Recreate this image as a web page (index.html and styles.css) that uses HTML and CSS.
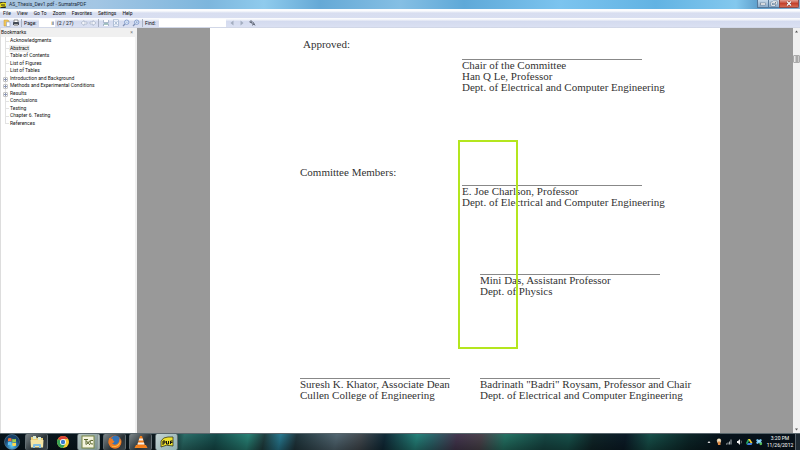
FILE: index.html
```html
<!DOCTYPE html>
<html lang="en">
<head>
<meta charset="utf-8">
<title>AS_Thesis_Dev1.pdf - SumatraPDF</title>
<link rel="stylesheet" href="styles.css">
</head>
<body>
<header class="titlebar">
  <svg class="app-icon" viewBox="0 0 6 6"><rect width="6" height="6" rx="1" fill="#222"/><path d="M0 1.5Q3 0 6 1V4.500Q3 4 0 5.500Z" fill="#e8dc20"/><path d="M1 3h4" stroke="#222" stroke-width="1"/></svg>
  <h1 class="title">AS_Thesis_Dev1.pdf - SumatraPDF</h1>
  <div class="window-controls">
    <button class="win-btn" aria-label="Minimize"><svg viewBox="0 0 10 7"><rect x="2.500" y="3" width="5" height="2" fill="#fff" stroke="#56687c" stroke-width=".5"/></svg></button>
    <button class="win-btn" aria-label="Restore"><svg viewBox="0 0 10 7"><path d="M4 1.500h3.500v3M2.500 2.500h3.500v3h-3.500z" fill="none" stroke="#56687c" stroke-width="1.600"/><path d="M4 1.500h3.500v3M2.500 2.500h3.500v3h-3.500z" fill="none" stroke="#fff" stroke-width=".8"/></svg></button>
    <button class="win-btn close" aria-label="Close"><svg viewBox="0 0 10 7"><path d="M3 1.500l4 4M7 1.500l-4 4" stroke="#6b2c25" stroke-width="2"/><path d="M3 1.500l4 4M7 1.500l-4 4" stroke="#fff" stroke-width="1.200"/></svg></button>
  </div>
</header>
<nav class="menubar">
  <button>File</button><button>View</button><button>Go To</button><button>Zoom</button><button>Favorites</button><button>Settings</button><button>Help</button>
</nav>
<div class="toolbar">
  <button class="tool" aria-label="Open"><svg viewBox="0 0 8 8"><path d="M1 1h4l1 1v5H1z" fill="#f0c558" stroke="#c59a3a" stroke-width=".5"/><path d="M3.500 3h3.500v4.500H3.500z" fill="#fff" stroke="#8aa2c8" stroke-width=".6"/></svg></button>
  <button class="tool" aria-label="Print"><svg viewBox="0 0 8 8"><path d="M2 3V1h4v2" fill="#fff" stroke="#666" stroke-width=".7"/><rect x="1" y="3" width="6" height="3" rx=".6" fill="#444b56"/><path d="M2 5h4v2H2z" fill="#aaa"/></svg></button>
  <span class="divider"></span>
  <label class="page-label" for="page">Page:</label>
  <input class="page-input" id="page" value="ii">
  <span class="page-total">(2 / 27)</span>
  <button class="tool" aria-label="Previous page"><svg viewBox="0 0 8 8"><path d="M1 4l3-2.500v1.500h3v2H4v1.500z" fill="#f4f6fb" stroke="#9dabc0" stroke-width=".6"/></svg></button>
  <button class="tool" aria-label="Next page"><svg viewBox="0 0 8 8"><path d="M7 4L4 1.500v1.500H1v2h3v1.500z" fill="#f4f6fb" stroke="#9dabc0" stroke-width=".6"/></svg></button>
  <span class="divider"></span>
  <button class="tool wide" aria-label="Fit width"><svg viewBox="0 0 8 8"><path d="M1.500 1v2.500h5V1M1.500 7V5h5v2" fill="#fff" stroke="#8fa2ba" stroke-width=".7"/><path d="M2 5h4" stroke="#7cb0a0" stroke-width="1"/></svg></button>
  <button class="tool wide" aria-label="Fit page"><svg viewBox="0 0 8 8"><rect x="1.500" y=".8" width="5" height="6.400" fill="#f4f8ff" stroke="#8ea4c2" stroke-width=".6"/><path d="M2.500 2l3 4M5.500 2l-3 4" stroke="#91a8c5" stroke-width=".7"/></svg></button>
  <button class="tool wide" aria-label="Zoom out"><svg viewBox="0 0 8 8"><path d="M1 7l2-2" stroke="#7f91b3" stroke-width="1.200"/><circle cx="4.700" cy="3.200" r="2.200" fill="#e4f0ff" stroke="#6482bd" stroke-width=".7"/><path d="M3.700 3.200h2" stroke="#7c93bb" stroke-width=".6"/></svg></button>
  <button class="tool wide" aria-label="Zoom in"><svg viewBox="0 0 8 8"><path d="M1 7l2-2" stroke="#7f91b3" stroke-width="1.200"/><circle cx="4.700" cy="3.200" r="2.200" fill="#e4f0ff" stroke="#6482bd" stroke-width=".7"/><path d="M3.700 3.200h2M4.700 2.200v2" stroke="#7c93bb" stroke-width=".6"/></svg></button>
  <span class="divider"></span>
  <label class="find-label" for="find">Find:</label>
  <input class="find-input" id="find">
  <button class="tool wide" aria-label="Find previous"><svg viewBox="0 0 8 8"><path d="M5.500 1.500v5L2.500 4z" fill="#a3adbf"/></svg></button>
  <button class="tool wide" aria-label="Find next"><svg viewBox="0 0 8 8"><path d="M2.500 1.500v5L5.500 4z" fill="#a3adbf"/></svg></button>
  <button class="tool wide" aria-label="Match case"><svg viewBox="0 0 8 8"><path d="M2 3.500V2h2v3M2 3.500h2M4.500 6.500l1-3 1.500 3M5 5.500h1.500" fill="none" stroke="#555d6c" stroke-width=".8"/></svg></button>
</div>
<main class="workspace">
  <aside class="sidebar">
    <div class="sidebar-head"><h2>Bookmarks</h2><button aria-label="Close bookmarks">×</button></div>
    <ul class="tree">
      <li><a href="#">Acknowledgments</a></li>
      <li><a href="#" class="selected">Abstract</a></li>
      <li><a href="#">Table of Contents</a></li>
      <li><a href="#">List of Figures</a></li>
      <li><a href="#">List of Tables</a></li>
      <li class="branch"><a href="#">Introduction and Background</a></li>
      <li class="branch"><a href="#">Methods and Experimental Conditions</a></li>
      <li class="branch"><a href="#">Results</a></li>
      <li><a href="#">Conclusions</a></li>
      <li><a href="#">Testing</a></li>
      <li><a href="#">Chapter 6. Testing</a></li>
      <li><a href="#">References</a></li>
    </ul>
  </aside>
  <section class="viewer">
    <article class="paper">
      <p class="label approved">Approved:</p>
      <div class="signature chair">
        <p>Chair of the Committee</p>
        <p>Han Q Le, Professor</p>
        <p>Dept. of Electrical and Computer Engineering</p>
      </div>
      <p class="label members">Committee Members:</p>
      <div class="signature member">
        <p>E. Joe Charlson, Professor</p>
        <p>Dept. of Electrical and Computer Engineering</p>
      </div>
      <div class="signature physics">
        <p>Mini Das, Assistant Professor</p>
        <p>Dept. of Physics</p>
      </div>
      <div class="deans">
        <div class="signature dean">
          <p>Suresh K. Khator, Associate Dean</p>
          <p>Cullen College of Engineering</p>
        </div>
        <div class="signature">
          <p>Badrinath "Badri" Roysam, Professor and Chair</p>
          <p>Dept. of Electrical and Computer Engineering</p>
        </div>
      </div>
      <div class="highlight"></div>
    </article>
  </section>
  <div class="scrollbar">
    <button aria-label="Scroll up"><svg viewBox="0 0 7 7"><path d="M2 4.500L3.500 2.500 5 4.500z" fill="#555"/></svg></button>
    <div class="track"><div class="thumb"></div></div>
    <button aria-label="Scroll down"><svg viewBox="0 0 7 7"><path d="M2 2.500L3.500 4.500 5 2.500z" fill="#555"/></svg></button>
  </div>
</main>
<footer class="taskbar">
  <button class="task start" aria-label="Start"><svg viewBox="0 0 16 16"><defs><radialGradient id="orb" cy=".75"><stop offset="0" stop-color="#6fd0ee"/><stop offset=".6" stop-color="#2b78ad"/><stop offset="1" stop-color="#174067"/></radialGradient></defs><circle cx="8" cy="8" r="7.500" fill="url(#orb)" stroke="#6a93ac" stroke-width=".5"/><path d="M4 4.500q2-1 3.500 0v3q-2-1-3.500 0z" fill="#ef6b35"/><path d="M8.300 4.800q2 1 3.700 0v3q-1.700 1-3.700 0z" fill="#a4d149"/><path d="M4 8.300q2-1 3.500 0v3q-2-1-3.500 0z" fill="#64c5f4"/><path d="M8.300 8.600q2 1 3.700 0v3q-1.700 1-3.700 0z" fill="#ffd94c"/></svg></button>
  <button class="task open" aria-label="Explorer"><svg viewBox="0 0 16 16"><path d="M2 3h5l1 1h6v9H2z" fill="#e9cf78"/><path d="M4 2h3v3H4zM9 3h3v3H9z" fill="#d8e9d4"/><path d="M1.500 6h13l-.5 7.500H2z" fill="#f6e6a4"/><path d="M4 14v-3q0-1 1-1h6q1 0 1 1v3h-2v-2H6v2z" fill="#82bfe2"/></svg></button>
  <button class="task" aria-label="Chrome"><svg viewBox="0 0 16 16"><circle cx="8" cy="8" r="6" fill="#f5cd32"/><path d="M8 8L2.800 5A6 6 0 0 1 13.200 5H8z" fill="#db4437"/><path d="M2.800 5A6 6 0 0 0 8 14L10.600 9.500 8 8z" fill="#37a257"/><circle cx="8" cy="8" r="3" fill="#fff"/><circle cx="8" cy="8" r="2.200" fill="#397bd1"/></svg></button>
  <button class="task open active txc" aria-label="TeXnicCenter"><svg viewBox="0 0 16 16"><rect x="2" y="2" width="12" height="12" fill="#f5f5df" stroke="#7b8745"/><path d="M4 5.500h4M6 5.500v5M6.500 7l3.500 4M10 6.500l-3.500 4M13 6.500q-3-1-3 1.500t3 2" stroke="#59652c" fill="none"/></svg></button>
  <button class="task open" aria-label="Firefox"><svg viewBox="0 0 16 16"><circle cx="8" cy="8" r="6.500" fill="#e66d21"/><circle cx="8.500" cy="6.500" r="4.800" fill="#3373b7"/><path d="M2 4q1 0 2 1 1-1 2 0-1 1 1.500 2.500-1 2-2.500 1.500 2 3 5 1 3-2 2-6 2 2 2 5-1 5.500-6 5.500T1.500 9z" fill="#ee7b24"/><path d="M13.500 6q0 6-5.500 7-3 0-4-1.500 3 1.500 6 0 3-2 3.500-5.500z" fill="#f9cb4b"/></svg></button>
  <button class="task open" aria-label="VLC"><svg viewBox="0 0 16 16"><path d="M3 11h10l1.500 3H1.500z" fill="#f58421"/><path d="M7 2h2l3 10q-4 2-8 0z" fill="#f37c18"/><path d="M6.300 4.500h3.400l.7 2H5.600zM5 8.500h6l.5 2h-7z" fill="#f1eee9"/></svg></button>
  <button class="task open active sumatra" aria-label="SumatraPDF"><svg viewBox="0 0 16 16"><path d="M2 7q2-4 7-4h5v9q-7-2-12 1z" fill="#eee22d" stroke="#242611" stroke-width=".7"/><path d="M4 11V7h2v2H4M7.500 7v3h2V7M11.500 10V7h2M11.500 8.500h2" fill="none" stroke="#111" stroke-width="1"/></svg></button>
  <div class="tray">
    <svg viewBox="0 0 8 8"><path d="M2.500 5L4 3l1.500 2z" fill="#ddd"/></svg>
    <svg viewBox="0 0 8 8"><circle cx="4" cy="2.800" r="2.200" fill="#eee2c4"/><path d="M2.500 3.500h3v3.500h-2.500z" fill="#dd8b46"/><path d="M2 2h1M5 2h1" stroke="#b28b70" stroke-width=".6"/></svg>
    <svg viewBox="0 0 8 8"><path d="M1 6.500h1v-1H1zM2.500 6.500h1v-2h-1zM4 6.500h1v-3H4zM5.500 6.500h1v-5h-1z" fill="#aeb6ba"/></svg>
    <svg viewBox="0 0 8 8"><path d="M2 3h1l2-2v6L3 5H2z" fill="#eee"/><path d="M6 2.500q1 1.500 0 3" fill="none" stroke="#aaa" stroke-width=".6"/></svg>
    <svg viewBox="0 0 8 8"><path d="M3 1h2l-3 6-1-2z" fill="#22a565"/><path d="M3 1h2l2.500 4h-2z" fill="#f5cf36"/><path d="M3 5h4.500L6.500 7H2z" fill="#3e7fe0"/></svg>
    <svg viewBox="0 0 8 8"><path d="M1 2l1.500-1L4 2l1.500-1L7 2 6 3.500 7 5 5.500 6 4 5 2.500 6 1 5l1-1.500z" fill="#78c8f4"/><path d="M3 3l1-.6 1 .6-1 .8z" fill="#fff"/><circle cx="5.800" cy="5.800" r="1.400" fill="#54bd54"/></svg>
  </div>
  <div class="clock"><time>3:20 PM</time><time>11/26/2012</time></div>
  <button class="show-desktop" aria-label="Show desktop"></button>
</footer>
</body>
</html>
```
FILE: styles.css
```css
*, *::before, *::after { box-sizing: border-box; }
body {
  margin: 0;
  height: 100vh;
  display: flex;
  flex-direction: column;
  overflow: hidden;
  font: 5px/7px Roboto, "Open Sans", sans-serif;
  color: #111;
}
button, input {
  font: inherit;
  color: inherit;
  border: 0;
  padding: 0;
  margin: 0;
  background: none;
  border-radius: 0;
}
h1, h2, p, ul { margin: 0; padding: 0; font: inherit; }
svg { display: block; }

.titlebar {
  flex: none;
  height: 9px;
  display: flex;
  align-items: center;
  padding-right: 1px;
  background: linear-gradient(90deg, #a9c4dd 0%, #a3c6e4 12%, #7db6dd 26%, #8fcbed 33%, #65a9d6 40%, #85bfe4 50%, #5fa9d8 58%, #7cc4ef 70%, #62b3e3 82%, #83c8ee 92%, #5b9cc9 95%, #86b0d0 100%);
}
.app-icon { width: 6px; height: 6px; margin-right: 3px; }
.title { flex: 1; color: #1a2a3a; }
.window-controls { display: flex; align-self: flex-start; }
.win-btn {
  width: 11px;
  height: 8px;
  border: 1px solid #55789a;
  border-top: 0;
  border-right-width: 0;
  background: linear-gradient(#c7d9e9, #8cacca);
}
.win-btn svg { height: 7px; margin: 0 auto; }
.win-btn.close {
  width: 20px;
  border: 1px solid #8a4a48;
  border-top: 0;
  border-radius: 0 0 2px 0;
  background: linear-gradient(#e0a094, #c5412b 50%, #d4694f);
}

.menubar {
  flex: none;
  height: 9px;
  display: flex;
  align-items: center;
  gap: 6px;
  padding-left: 3px;
  background: linear-gradient(#fbfcfe 20%, #d8def0 45%, #d9dff1);
}
.toolbar {
  flex: none;
  height: 10px;
  display: flex;
  align-items: center;
  padding-left: 2px;
  background: linear-gradient(#fafbfd 10%, #d4dbef 35%, #dae0f2 85%, #cdd3e2);
}
.tool { width: 9px; height: 8px; }
.tool.wide { width: 10px; }
.tool svg { width: 8px; height: 8px; margin: 0 auto; }
.divider { width: 1px; height: 8px; margin: 0 2px 0 1px; background: #a9b1c3; }
.page-label { width: 15px; }
.page-input { width: 16px; height: 8px; background: #fff; text-align: right; padding-right: 1px; }
.page-total { width: 24px; padding-left: 2px; }
.find-label { width: 14px; }
.find-input { width: 67px; height: 8px; background: #fff; margin-right: 1px; }

.workspace { flex: 1; min-height: 0; display: flex; }
.sidebar {
  flex: none;
  width: 137px;
  border-left: 1px solid #ddd;
  border-right: 2px solid #f0f0f0;
  background: #fff;
}
.sidebar-head {
  height: 9px;
  display: flex;
  align-items: center;
  justify-content: space-between;
  padding-right: 2px;
  background: #f0f0f0;
}
.sidebar-head button { color: #777; }
.tree {
  height: 90px;
  display: grid;
  grid-auto-rows: 1fr;
  list-style: none;
  padding-left: 4px;
}
.tree li { display: flex; align-items: center; position: relative; padding-left: 4px; }
.tree li::before {
  content: "";
  position: absolute;
  left: 0;
  top: 0;
  bottom: 0;
  border-left: 1px solid #e2e2e2;
}
.tree li:last-child::before { bottom: 50%; }
.tree li::after {
  content: "";
  position: absolute;
  left: 0;
  top: 50%;
  width: 4px;
  border-top: 1px solid #e2e2e2;
}
.tree .branch::after {
  left: -2px;
  top: 2px;
  width: 5px;
  height: 5px;
  border: 1px solid #c4c4c4;
  border-radius: 1px;
  background:
    linear-gradient(#8c97b3, #8c97b3) center / 3px 1px no-repeat,
    linear-gradient(#8c97b3, #8c97b3) center / 1px 3px no-repeat,
    #fff;
}
.tree a { color: inherit; text-decoration: none; line-height: 7px; padding: 0 1px; }
.tree .selected { background: #eee; }

.viewer { flex: 1; min-width: 0; display: flex; padding: 0 73px; background: #999; }
.paper {
  flex: 1;
  position: relative;
  padding: 11px 0 0 90px;
  background: #fff;
  font: 11px/11px "Liberation Serif", serif;
  color: #333;
  white-space: nowrap;
}
.approved { padding-left: 3px; }
.signature { width: 180px; border-top: 1px solid #888; }
.chair { margin: 9px 0 0 162px; }
.members { margin-top: 74px; }
.member { margin: 7px 0 0 162px; }
.physics { margin: 66px 0 0 180px; }
.deans { display: flex; gap: 30px; margin-top: 81px; }
.dean { width: 150px; }
.highlight {
  position: absolute;
  left: 248px;
  top: 112px;
  width: 60px;
  height: 209px;
  border: 2px solid #b4e61e;
}

.scrollbar { flex: none; width: 7px; display: flex; flex-direction: column; background: #f0f0f0; }
.scrollbar button { height: 7px; }
.track { flex: 1; padding-top: 20px; }
.thumb { height: 8px; border: 1px solid #aaa; border-radius: 1px; background: linear-gradient(90deg, #f5f5f5, #999 60%, #ddd); }

.taskbar {
  flex: none;
  height: 17px;
  display: flex;
  align-items: stretch;
  gap: 3px;
  padding-left: 1px;
  border-top: 1px solid #58656b;
  background:
    linear-gradient(#0000, #0005),
    linear-gradient(100deg, #07141c 0%, #0d1b21 21%, #2b6e69 23%, #164d4c 27%, #288276 31%, #203f40 33%, #287a91 35%, #20363d 37%, #526772 42%, #434a50 45%, #102a38 48%, #25837b 52%, #2c656b 54%, #453750 57%, #4b434c 60%, #247364 63%, #174845 68%, #17504a 71%, #102629 74%, #0b1b27 78%, #17504a 81%, #0c2628 86%, #07131c 90%, #08131c 100%);
}
.task { width: 23px; height: 16px; }
.task svg { width: 16px; height: 16px; margin: 0 auto; }
.start { width: 21px; }
.open { border: 1px solid #626d72; border-top: 0; border-bottom: 0; border-radius: 2px; background: linear-gradient(135deg, #7b8588, #293237 60%, #3d464b); }
.active { background: linear-gradient(135deg, #b5c4c2, #78918f); }
.active.sumatra { background: linear-gradient(135deg, #c3d3d3, #8fb0b0); }
.txc { border-right: 3px double #8b9999; }
.tray { margin-left: auto; display: flex; align-items: center; gap: 2px; }
.tray svg { width: 8px; height: 8px; }
.clock { width: 28px; display: flex; flex-direction: column; justify-content: center; text-align: center; color: #fff; line-height: 7px; }
.show-desktop { width: 5px; margin-left: -2px; border-left: 1px solid #56616a; background: #1d2932; }
```
